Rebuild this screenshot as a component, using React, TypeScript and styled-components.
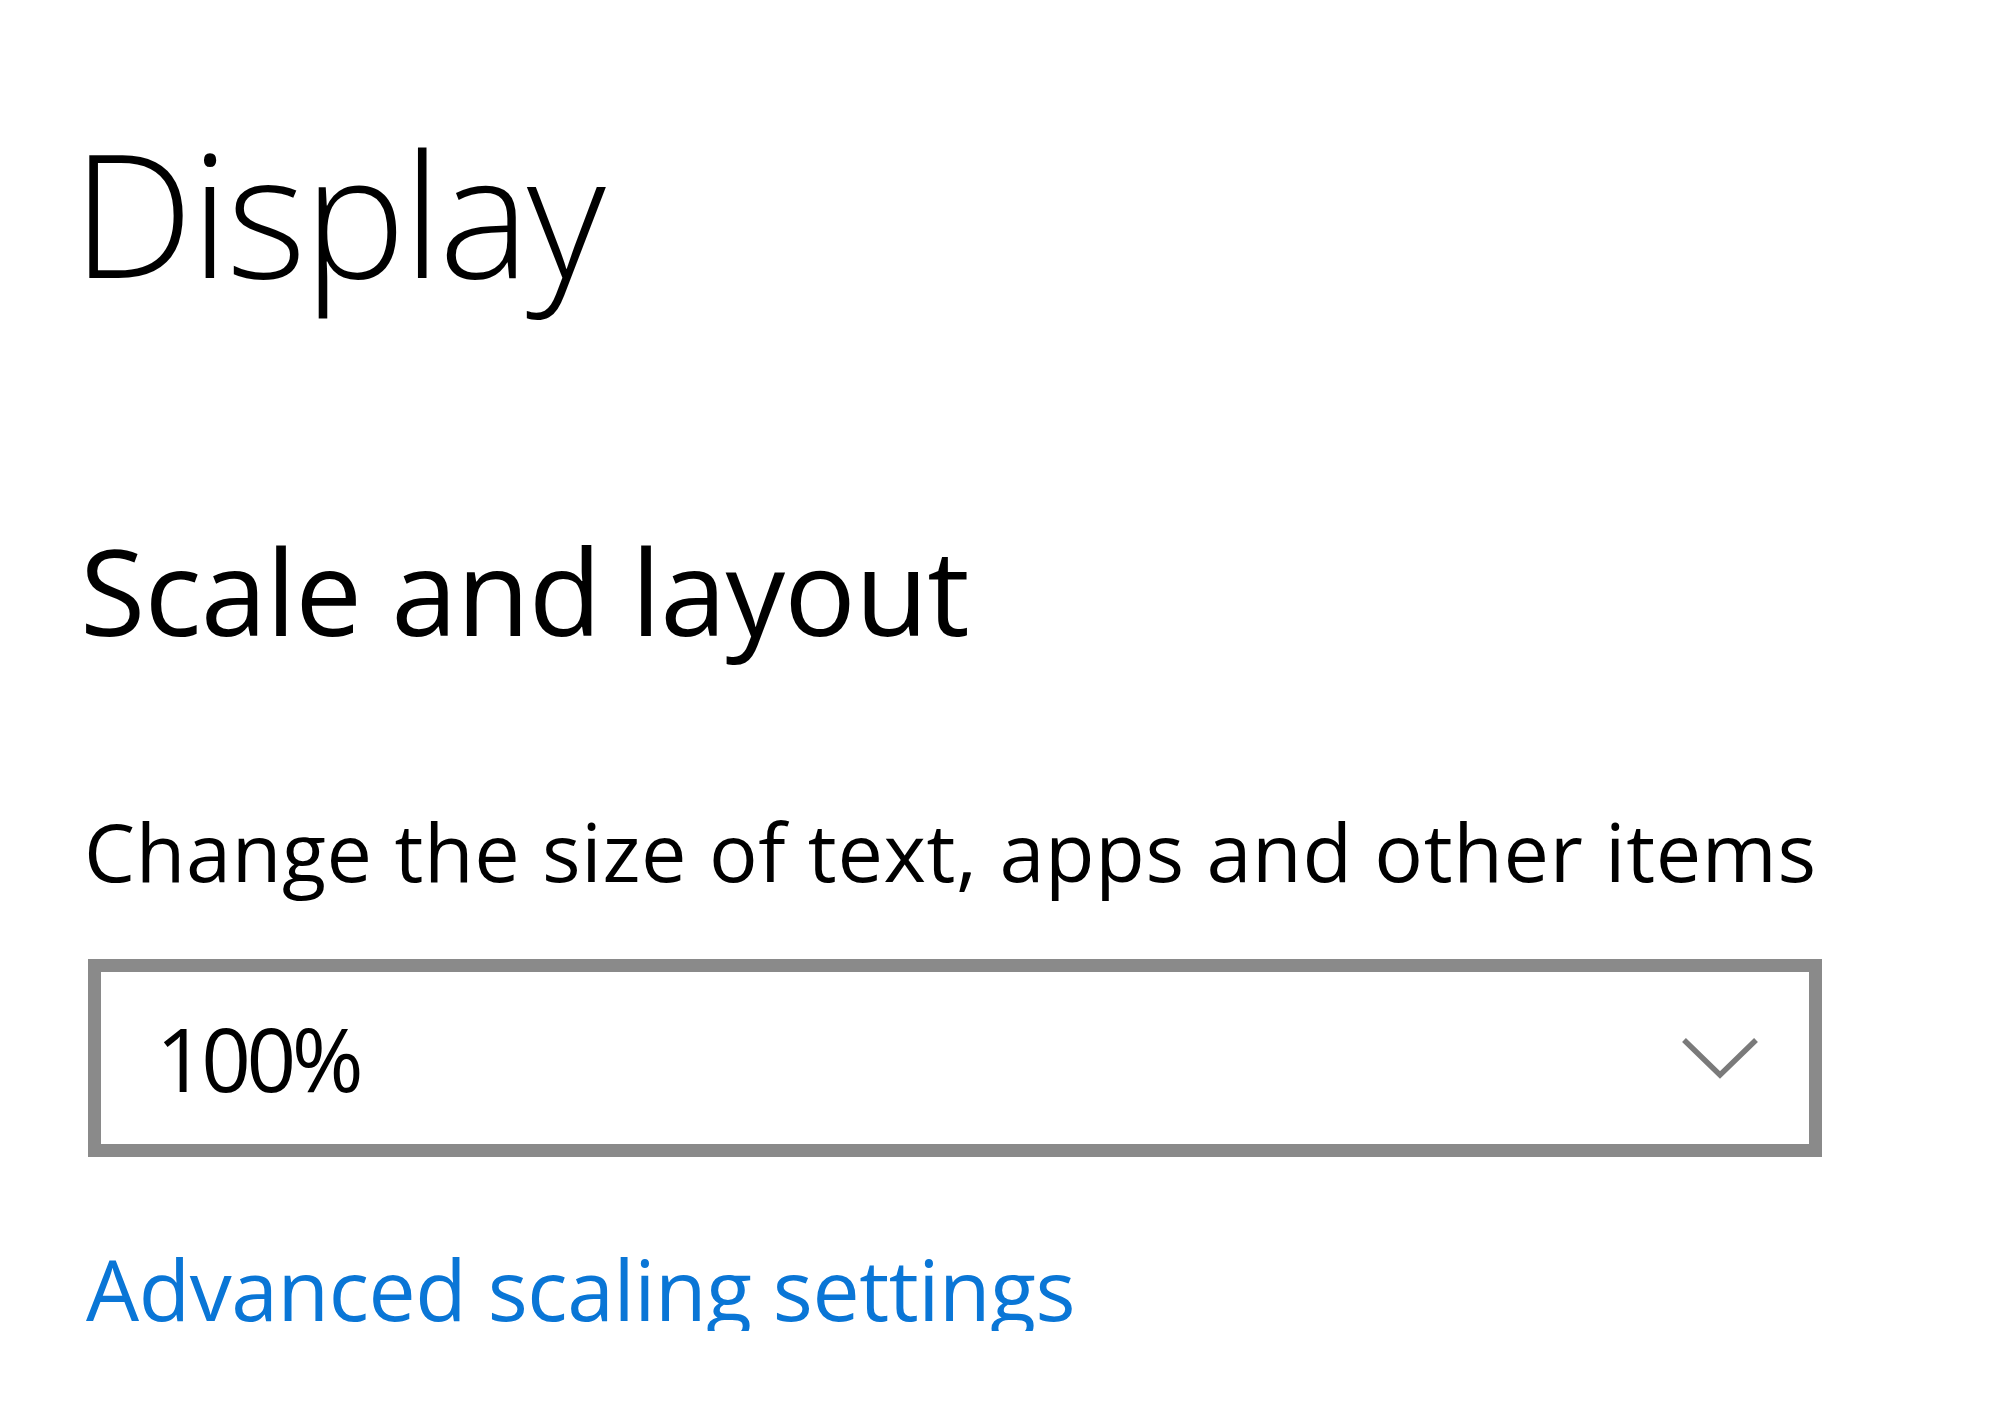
import React from "react";
import styled, { createGlobalStyle } from "styled-components";

const Global = createGlobalStyle`
  html, body {
    margin: 0;
    padding: 0;
    background: #ffffff;
  }
  body {
    font-family: "Open Sans", "Noto Sans", "Liberation Sans", sans-serif;
    color: #000000;
  }
`;

const Page = styled.main`
  display: flex;
  flex-direction: column;
  align-items: flex-start;
  padding: 125px 0 0 80px;
  width: 2000px;
  box-sizing: border-box;
`;

const Title = styled.h1`
  margin: 0 0 0 -8px;
  font-size: 172px;
  font-weight: 300;
  line-height: 1;
  letter-spacing: -3px;
`;

const Section = styled.section`
  display: flex;
  flex-direction: column;
  align-items: flex-start;
  margin-top: 234px;
`;

const SectionTitle = styled.h2`
  margin: 0;
  font-size: 119px;
  font-weight: 400;
  line-height: 1;
  letter-spacing: -0.8px;
`;

const Label = styled.div`
  margin: 160px 0 0 4px;
  font-size: 81px;
  font-weight: 400;
  line-height: 1;
  letter-spacing: 0.65px;
`;

const Select = styled.div`
  margin-top: 68px;
  margin-left: 8px;
  width: 1734px;
  height: 198px;
  box-sizing: border-box;
  border: 13px solid #8a8a8a;
  display: flex;
  align-items: center;
  justify-content: space-between;
  padding: 0 49px 0 55px;
`;

const SelectValue = styled.span`
  font-size: 87px;
  line-height: 1;
  letter-spacing: -4.5px;
`;

const Chevron = styled.svg`
  width: 80px;
  height: 44px;
  display: block;
`;

const Link = styled.a`
  margin: 90px 0 0 6px;
  font-size: 84px;
  line-height: 1;
  letter-spacing: -0.4px;
  color: #0a76d6;
  text-decoration: none;
  cursor: pointer;
`;

export default function App() {
  return (
    <>
      <Global />
      <Page>
        <Title>Display</Title>
        <Section>
          <SectionTitle>Scale and layout</SectionTitle>
          <Label>Change the size of text, apps and other items</Label>
          <Select role="combobox" aria-expanded="false">
            <SelectValue>100%</SelectValue>
            <Chevron viewBox="0 0 80 44" fill="none">
              <path d="M4 4 L40 39 L76 4" stroke="#7a7a7a" strokeWidth="5.5" />
            </Chevron>
          </Select>
          <Link>Advanced scaling settings</Link>
        </Section>
      </Page>
    </>
  );
}
